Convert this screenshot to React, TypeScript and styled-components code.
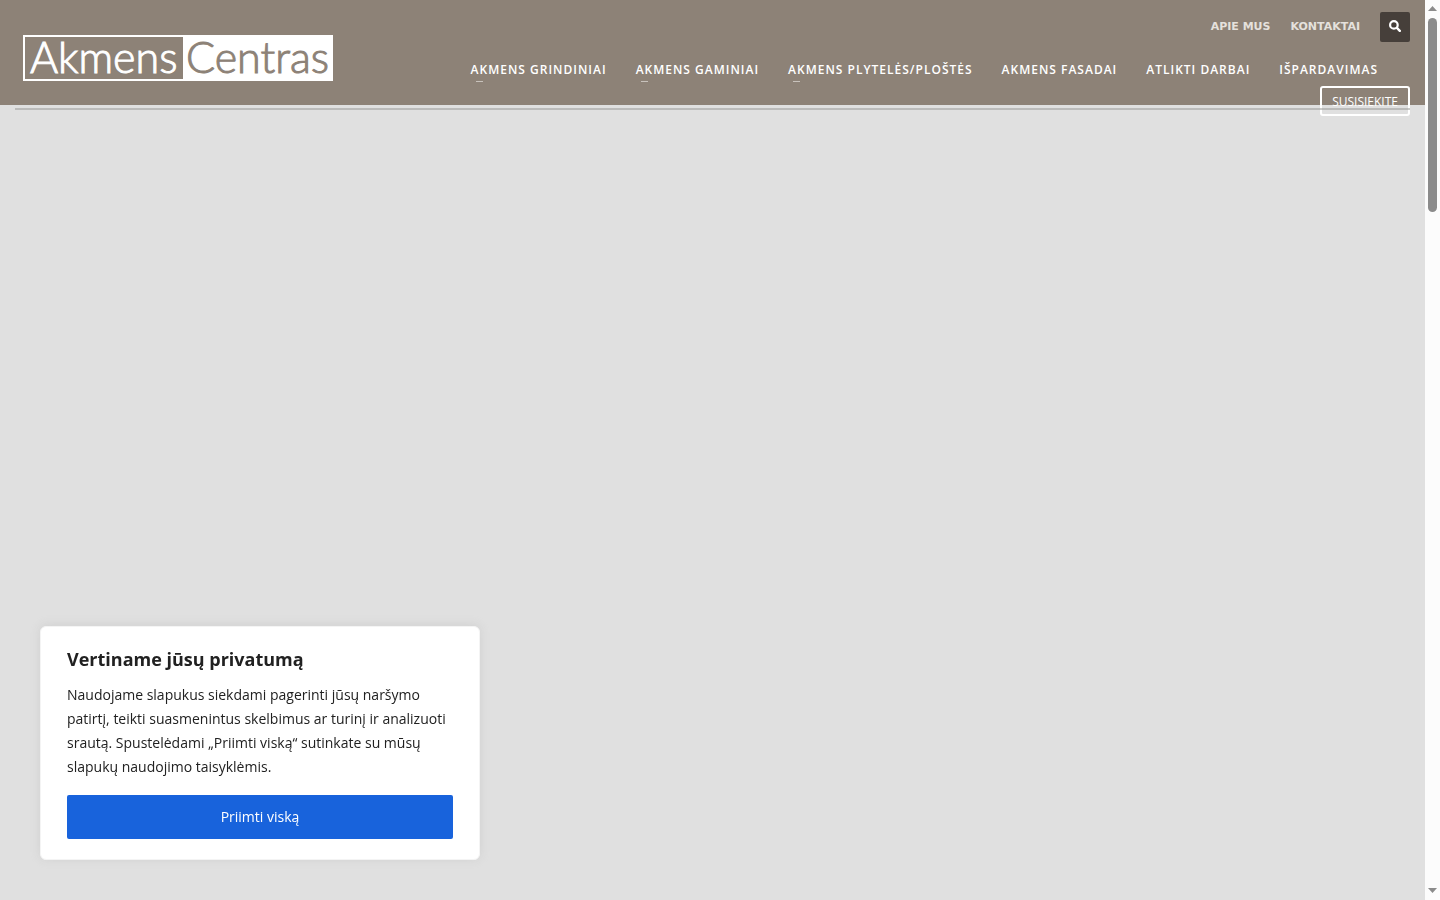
import React from "react";
import styled, { createGlobalStyle } from "styled-components";

const GlobalStyle = createGlobalStyle`
  * { box-sizing: border-box; }
  body {
    margin: 0;
    background: #e0e0e0;
    font-family: "Open Sans", "Noto Sans", sans-serif;
  }
`;

const Window = styled.div`
  display: flex;
  min-height: 100vh;
`;

const Page = styled.div`
  flex: 1;
  min-width: 0;
`;

const Header = styled.header`
  display: flex;
  justify-content: space-between;
  align-items: flex-start;
  height: 105px;
  padding: 12px 15px 0;
  background: #8d8277;
`;

const LogoLink = styled.a`
  display: block;
  flex: none;
  margin: 23px 0 0 8px;
  line-height: 0;
`;

const LogoDrawing = styled.svg`
  display: block;
  overflow: visible;
`;

const LogoText = styled.text`
  font-family: Lato, sans-serif;
  font-weight: 300;
  font-size: 43px;
  line-height: 43px;
  stroke-width: 1px;
`;

const HeaderRight = styled.div`
  display: flex;
  flex-direction: column;
  align-items: flex-end;
`;

const TopBar = styled.div`
  display: flex;
  align-items: center;
  gap: 20px;
  height: 30px;
`;

const TopLink = styled.a`
  color: #e5e1dd;
  font: bold 11px/20px "DejaVu Sans", sans-serif;
  text-decoration: none;
`;

const SearchButton = styled.button`
  display: grid;
  place-items: center;
  width: 30px;
  height: 30px;
  padding: 0 0 2px;
  border: 0;
  border-radius: 2px;
  background: #463f3a;
  color: #fff;
`;

const Nav = styled.nav`
  display: flex;
  gap: 29px;
  margin: 18px 32px 0 0;
`;

const NavLink = styled.a<{ $hasMenu?: boolean }>`
  position: relative;
  color: #fff;
  font-size: 12px;
  font-weight: 600;
  line-height: 20px;
  letter-spacing: 1px;
  text-decoration: none;
  white-space: nowrap;

  &::after {
    content: "";
    display: ${(p) => (p.$hasMenu ? "block" : "none")};
    position: absolute;
    top: 21px;
    left: 5px;
    width: 7px;
    height: 1px;
    background: #c8c2bc;
  }
`;

const ContactButton = styled.a`
  height: 30px;
  margin-top: 6px;
  padding: 1px 10px 0;
  border: 2px solid #fff;
  border-radius: 3px;
  color: #fff;
  font-size: 12px;
  line-height: 26px;
  text-decoration: none;
`;

const Divider = styled.hr`
  position: relative;
  height: 2px;
  margin: 3px 15px 0;
  border: 0;
  background: rgba(150, 150, 148, 0.5);
`;

const Scrollbar = styled.div`
  position: sticky;
  top: 0;
  display: flex;
  flex-direction: column;
  align-items: center;
  width: 15px;
  height: 100vh;
  padding: 6px 0 7px;
  background: #fcfcfc;
`;

const ScrollArrow = styled.svg`
  display: block;
  flex: none;
  fill: #8b8b8b;
`;

const ScrollThumb = styled.div`
  width: 9px;
  height: 194px;
  margin: 7px 0 auto;
  border-radius: 5px;
  background: #8b8b8b;
`;

const Consent = styled.section`
  position: fixed;
  left: 40px;
  bottom: 40px;
  width: 440px;
  max-width: calc(100vw - 80px);
  padding: 20px 26px;
  border: 1px solid #f4f4f4;
  border-radius: 6px;
  background: #fff;
  color: #212121;
  box-shadow: 0 -1px 10px rgba(172, 171, 171, 0.3);
`;

const ConsentTitle = styled.h2`
  margin: 0 0 12px;
  font-size: 18px;
  font-weight: 700;
  line-height: 24px;
`;

const ConsentText = styled.p`
  margin: 0 0 16px;
  font-size: 14px;
  line-height: 24px;
`;

const AcceptButton = styled.button`
  display: block;
  width: 100%;
  height: 44px;
  padding: 0;
  border: 0;
  border-radius: 2px;
  background: #1863dc;
  color: #fff;
  font: 14px/24px "Open Sans", "Noto Sans", sans-serif;
`;

const navItems = [
  { label: "AKMENS GRINDINIAI", hasMenu: true },
  { label: "AKMENS GAMINIAI", hasMenu: true },
  { label: "AKMENS PLYTELĖS/PLOŠTĖS", hasMenu: true },
  { label: "AKMENS FASADAI" },
  { label: "ATLIKTI DARBAI" },
  { label: "IŠPARDAVIMAS" },
];

function Logo() {
  return (
    <LogoLink href="#" aria-label="Akmens Centras">
      <LogoDrawing width="310" height="46" viewBox="0 0 310 46">
        <rect width="310" height="46" fill="#fff" />
        <rect x="2" y="2" width="158" height="42" fill="#8d8277" />
        <LogoText x="7" y="38" fill="#fff" stroke="#fff">Akmens</LogoText>
        <LogoText x="163" y="38" fill="#8d8277" stroke="#8d8277">Centras</LogoText>
      </LogoDrawing>
    </LogoLink>
  );
}

export default function App() {
  return (
    <>
      <GlobalStyle />
      <Window>
        <Page>
          <Header>
            <Logo />
            <HeaderRight>
              <TopBar>
                <TopLink href="#">APIE MUS</TopLink>
                <TopLink href="#">KONTAKTAI</TopLink>
                <SearchButton aria-label="Paieška">
                  <svg width="12" height="12" viewBox="0 0 12 12" fill="none" stroke="currentColor">
                    <circle cx="4.9" cy="4.9" r="3.8" strokeWidth="2.2" />
                    <path d="M7.9 7.9 10.8 10.8" strokeWidth="2.4" strokeLinecap="round" />
                  </svg>
                </SearchButton>
              </TopBar>
              <Nav>
                {navItems.map((item) => (
                  <NavLink key={item.label} href="#" $hasMenu={item.hasMenu}>
                    {item.label}
                  </NavLink>
                ))}
              </Nav>
              <ContactButton href="#">SUSISIEKITE</ContactButton>
            </HeaderRight>
          </Header>
          <Divider />
        </Page>
        <Scrollbar aria-hidden="true">
          <ScrollArrow width="9" height="5" viewBox="0 0 9 5"><path d="M0 5 4.5 0 9 5z" /></ScrollArrow>
          <ScrollThumb />
          <ScrollArrow width="9" height="5" viewBox="0 0 9 5"><path d="M0 0 4.5 5 9 0z" /></ScrollArrow>
        </Scrollbar>
      </Window>
      <Consent aria-labelledby="consent-title">
        <ConsentTitle id="consent-title">Vertiname jūsų privatumą</ConsentTitle>
        <ConsentText>
          Naudojame slapukus siekdami pagerinti jūsų naršymo patirtį, teikti suasmenintus skelbimus ar
          turinį ir analizuoti srautą. Spustelėdami „Priimti viską“ sutinkate su mūsų slapukų naudojimo
          taisyklėmis.
        </ConsentText>
        <AcceptButton>Priimti viską</AcceptButton>
      </Consent>
    </>
  );
}
